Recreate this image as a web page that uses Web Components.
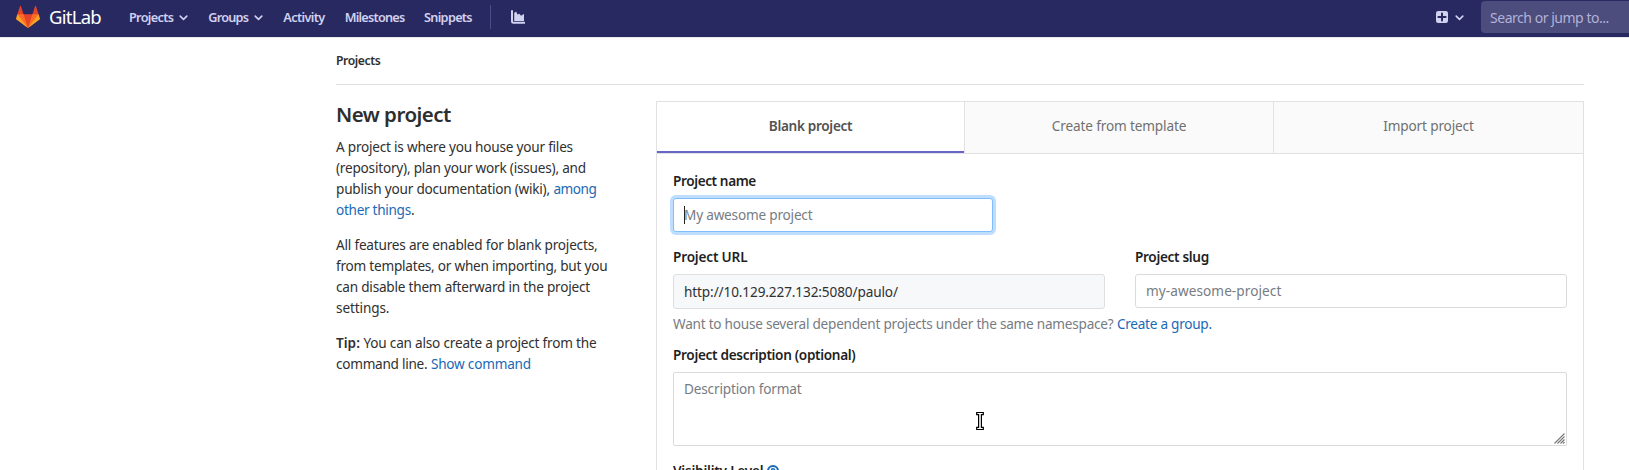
<!DOCTYPE html>
<html lang="en">
<head>
<meta charset="utf-8">
<title>New project · GitLab</title>
<style>
html{overflow:hidden}
body{margin:0;height:470px;overflow:hidden;background:#fff;color:#303030;font:13.6px/21px "Noto Sans","Open Sans",sans-serif}
</style>
</head>
<body>
<gl-app></gl-app>
<script>
const define = (name, html, setup) => customElements.define(name, class extends HTMLElement {
  connectedCallback() {
    if (this.shadowRoot) return;
    const t = document.createElement('template');
    t.innerHTML = html;
    this.attachShadow({mode: 'open'}).append(t.content.cloneNode(true));
    if (setup) setup(this, this.shadowRoot);
  }
});

/* Single run of text, tracked to the width in its "w" attribute. */
define('gl-text', `<style>:host{display:inline-block;white-space:nowrap;vertical-align:baseline}</style><slot></slot>`, el => {
  requestAnimationFrame(() => fit(el));
  fit(el);
});
function fit(el) {
  const w = parseFloat(el.getAttribute('w'));
  el.style.letterSpacing = '0px';
  el.style.width = 'auto';
  const n = el.textContent.length, now = el.getBoundingClientRect().width;
  if (!w || !now || n < 2) return;
  el.style.letterSpacing = ((w + 0.4 - now) / n).toFixed(3) + 'px';
}

define('gl-chevron', `<style>:host{display:block;width:9px;height:6px}svg{display:block}</style>
<svg width="9" height="6" viewBox="0 0 9 6"><path d="M1.2 1.1 4.5 4.4 7.8 1.1" fill="none" stroke="currentColor" stroke-width="1.6" stroke-linecap="round" stroke-linejoin="round"/></svg>`);

define('gl-logo', `<style>:host{display:flex;align-items:center;color:#fff;font-size:18.5px;line-height:26px}svg{display:block;margin-right:9px}</style>
<svg width="24" height="24" viewBox="0 0 36 36">
<path fill="#e24329" d="M2 14l9.38 9v-9l-4-12.28c-.205-.632-1.176-.632-1.38 0z"/>
<path fill="#e24329" d="M34 14l-9.38 9v-9l4-12.28c.205-.632 1.176-.632 1.38 0z"/>
<path fill="#e24329" d="M18 34.38 3 14 33 14z"/>
<path fill="#fc6d26" d="M18 34.38 11.38 14 2 14 6 25z"/>
<path fill="#fc6d26" d="M18 34.38 24.62 14 34 14 30 25z"/>
<path fill="#fca326" d="M2 14 .1 20.16c-.18.565 0 1.2.5 1.56l17.42 12.66z"/>
<path fill="#fca326" d="M34 14l1.9 6.16c.18.565 0 1.2-.5 1.56L18 34.38z"/>
</svg><gl-text w="51.5">GitLab</gl-text>`);

define('gl-navbar', `<style>
:host{display:flex;box-sizing:border-box;height:37px;background:#292961;color:#d1d1f0;padding-left:16px;font-size:12.7px;font-weight:600;line-height:20px;overflow:hidden}
.row{display:flex;align-items:center;height:34px;flex:1}
.item{display:flex;align-items:center}
.item gl-chevron{margin-left:6px;margin-right:-1px;margin-top:2px}
.sep{width:1px;height:24px;background:#4c4c86;margin-left:18px}
.chart{margin-left:20px}
.plus{display:flex;align-items:center;gap:7px;margin-left:auto}
.plus gl-chevron{margin-top:2px}
.search{box-sizing:border-box;width:148px;height:32px;margin-left:17px;background:#4c4c7d;border-radius:4px 0 0 4px;color:#b2b2d8;font-size:14px;font-weight:400;line-height:33px;padding-left:9px}
svg{display:block}
</style>
<div class="row">
<gl-logo style="font-weight:400"></gl-logo>
<div class="item" style="margin-left:28px"><gl-text w="44">Projects</gl-text><gl-chevron></gl-chevron></div>
<div class="item" style="margin-left:21px"><gl-text w="39.5">Groups</gl-text><gl-chevron></gl-chevron></div>
<div class="item" style="margin-left:21px"><gl-text w="41">Activity</gl-text></div>
<div class="item" style="margin-left:20px"><gl-text w="59.5">Milestones</gl-text></div>
<div class="item" style="margin-left:19.5px"><gl-text w="47.5">Snippets</gl-text></div>
<div class="sep"></div>
<svg class="chart" width="14" height="14" viewBox="0 0 14 14"><path d="M1 1v10.5q0 1.3 1.3 1.3H13.4" fill="none" stroke="currentColor" stroke-width="2" stroke-linecap="round"/><path d="M3.2 11V3l1.8-1.4 1.6 2.8 1.8-.6 1.4 1.7 1 .1 1.6-1.5.6.3V11z" fill="currentColor"/></svg>
<div class="plus"><svg width="12" height="12" viewBox="0 0 12 12"><rect width="12" height="12" rx="2.2" fill="currentColor"/><path d="M6 2.4v7.2M2.4 6h7.2" stroke="#292961" stroke-width="2" stroke-linecap="round"/></svg><gl-chevron></gl-chevron></div>
<div class="search"><gl-text w="118.5">Search or jump to...</gl-text></div>
</div>`);

define('gl-link', `<style>:host{display:inline;color:#1b69b6}</style><slot></slot>`);

define('gl-breadcrumb', `<style>:host{display:block;box-sizing:border-box;height:48px;padding-top:13px;border-bottom:1px solid #e1e1e1;font-size:12.2px;font-weight:600;line-height:21px}</style><slot></slot>`);

define('gl-intro', `<style>
:host{display:block;width:320px}
h4{margin:16px 0 9px;font-size:20.5px;font-weight:600;line-height:26px;color:#2e2e2e}
section{margin:0 0 14px}
section div{height:21px;white-space:nowrap}
b{font-weight:600}
</style>
<h4><gl-text w="114.5">New project</gl-text></h4>
<section><div><gl-text w="236.5">A project is where you house your files</gl-text></div>
<div><gl-text w="249.5">(repository), plan your work (issues), and</gl-text></div>
<div><gl-text w="213.5">publish your documentation (wiki),</gl-text> <gl-link><gl-text w="42.5">among</gl-text></gl-link></div>
<div><gl-link><gl-text w="74.5">other things</gl-text></gl-link>.</div></section>
<section><div><gl-text w="261">All features are enabled for blank projects,</gl-text></div>
<div><gl-text w="271">from templates, or when importing, but you</gl-text></div>
<div><gl-text w="253.5">can disable them afterward in the project</gl-text></div>
<div><gl-text w="53">settings.</gl-text></div></section>
<section><div><b><gl-text w="23.5">Tip:</gl-text></b> <gl-text w="232.5">You can also create a project from the</gl-text></div>
<div><gl-text w="91">command line.</gl-text> <gl-link><gl-text w="99.5">Show command</gl-text></gl-link></div></section>`);

define('gl-tab', `<style>
:host{display:block;box-sizing:border-box;height:52px;text-align:center;line-height:48px;background:#fafafa;color:#707070;border-left:1px solid #e1e1e1;border-bottom:1px solid #e1e1e1}
:host(:first-child){border-left:0}
:host([active]){background:#fff;color:#525252;font-weight:600;position:relative}
:host([active])::after{content:"";position:absolute;left:0;right:0;bottom:0;height:2px;background:#6666c4}
</style><slot></slot>`);

define('gl-field', `<style>
:host{display:block}
label{display:block;height:21px;margin-bottom:7px;font-weight:600;color:#1f1f1f}
</style><label><slot name="label"></slot></label><slot></slot>`);

define('gl-input', `<style>
:host{display:block;position:relative;box-sizing:border-box;height:34px;border:1px solid #dbdbdb;border-radius:3px;padding:5px 10px;color:#777c83;background:#fff}
:host([focus]){border-color:#80bdff;box-shadow:0 0 0 3px #bfdeff}
:host([focus])::before{content:"";position:absolute;left:10px;top:7px;width:1px;height:18px;background:#222}
:host([readonly]){height:35px;padding-top:6px;background:#f7f8fa;color:#303030;border-color:#dfdfdf}
:host([area]){height:74px;padding-top:5px;border-radius:2px}
svg{display:none;position:absolute;right:1px;bottom:1px}
:host([area]) svg{display:block}
</style><slot></slot>
<svg width="11" height="11" viewBox="0 0 11 11"><path d="M.5 10.5 10.5 .5M3.5 10.5 10.5 3.5M6.5 10.5 10.5 6.5M9 10.5 10.5 9" stroke="#777" stroke-width="1.1" fill="none"/></svg>`);

define('gl-help-icon', `<style>:host{display:inline-block;vertical-align:-1px;margin-left:4px}svg{display:block}</style>
<svg width="12" height="12" viewBox="0 0 12 12"><circle cx="6" cy="6" r="5" fill="none" stroke="#1b69b6" stroke-width="2"/><path d="M4.4 5q0-1.2 1.6-1.2T7.6 4.8Q7.6 5.8 6 6.5" fill="none" stroke="#1b69b6" stroke-width="1.5"/><circle cx="6" cy="8.4" r=".9" fill="#1b69b6"/></svg>`);

define('gl-form', `<style>
:host{display:block;box-sizing:border-box;width:928px;height:400px;margin-top:16px;border:1px solid #e1e1e1}
.tabs{display:grid;grid-template-columns:307px 309px 1fr}
.body{padding:16px 16px 0}
.name{width:320px}
.two{display:grid;grid-template-columns:432px 432px;gap:30px;margin-top:14px}
.help{height:21px;margin:4px 0 10px;color:#777c83;white-space:nowrap}
.vis{margin-top:14px;font-weight:600;color:#1f1f1f;white-space:nowrap}
</style>
<div class="tabs"><gl-tab active><gl-text w="83">Blank project</gl-text></gl-tab><gl-tab><gl-text w="134">Create from template</gl-text></gl-tab><gl-tab><gl-text w="90">Import project</gl-text></gl-tab></div>
<div class="body">
<gl-field class="name"><gl-text slot="label" w="82.5">Project name</gl-text><gl-input focus><gl-text w="128">My awesome project</gl-text></gl-input></gl-field>
<div class="two">
<gl-field><gl-text slot="label" w="74">Project URL</gl-text><gl-input readonly><gl-text w="213.5">http://10.129.227.132:5080/paulo/</gl-text></gl-input></gl-field>
<gl-field><gl-text slot="label" w="73.5">Project slug</gl-text><gl-input><gl-text w="135">my-awesome-project</gl-text></gl-input></gl-field>
</div>
<div class="help"><gl-text w="440">Want to house several dependent projects under the same namespace?</gl-text> <gl-link><gl-text w="94.5">Create a group.</gl-text></gl-link></div>
<gl-field><gl-text slot="label" w="182">Project description (optional)</gl-text><gl-input area><gl-text w="117">Description format</gl-text></gl-input></gl-field>
<div class="vis"><gl-text w="90">Visibility Level</gl-text><gl-help-icon></gl-help-icon></div>
</div>`);

define('gl-pointer', `<style>:host{position:absolute;left:976px;top:411px}svg{display:block}</style>
<svg width="8" height="20" viewBox="0 0 8 20"><path d="M.7 1.5h6.6v2.2H5.4v12.6h1.9v2.2H.7v-2.2h1.9V3.7H.7z" fill="#fff" stroke="#000" stroke-width="1.2"/></svg>`);

define('gl-app', `<style>
:host{display:block;height:470px;overflow:hidden;position:relative}
main{width:1248px;margin-left:336px}
.cols{display:flex}
gl-navbar{box-shadow:0 1px 0 #e8e8ee}
</style>
<gl-navbar></gl-navbar>
<main>
<gl-breadcrumb><gl-text w="44">Projects</gl-text></gl-breadcrumb>
<div class="cols"><gl-intro></gl-intro><gl-form></gl-form></div>
</main>
<gl-pointer></gl-pointer>`);

document.fonts.ready.then(() => {
  const walk = r => r.querySelectorAll('*').forEach(e => { if (e.localName === 'gl-text') fit(e); if (e.shadowRoot) walk(e.shadowRoot); });
  walk(document);
});
</script>
</body>
</html>
